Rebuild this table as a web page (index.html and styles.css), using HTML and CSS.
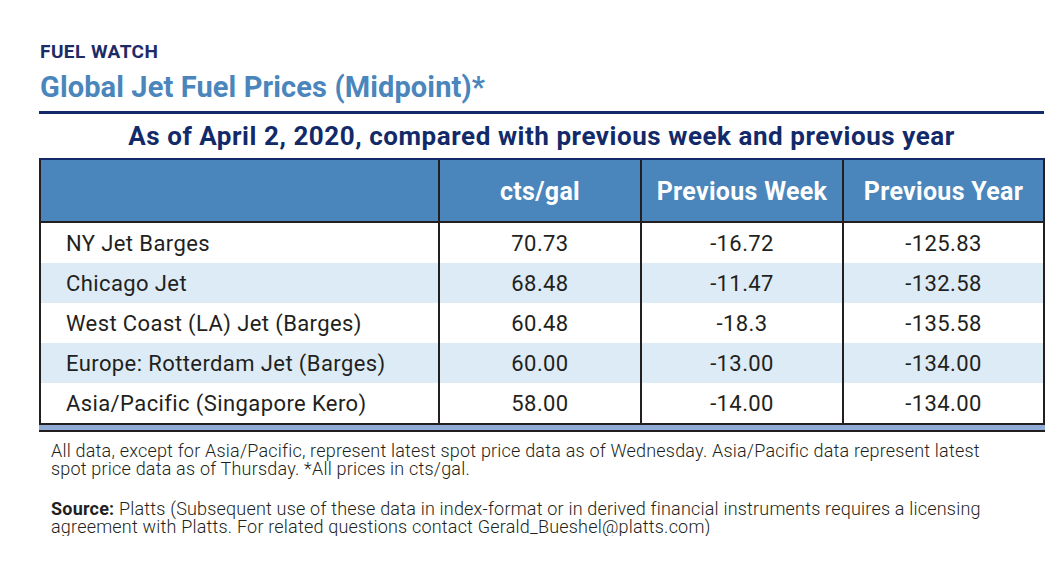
FILE: index.html
```html
<!DOCTYPE html>
<html>
<head>
<meta charset="utf-8">
<link rel="stylesheet" href="styles.css">
</head>
<body>
<div class="page">
  <div class="kicker">FUEL WATCH</div>
  <h1 class="title">Global Jet Fuel Prices (Midpoint)*</h1>
  <div class="rule"></div>
  <h2 class="subtitle">As of April 2, 2020, compared with previous week and previous year</h2>
  <div class="prices">
    <div class="row head">
      <div class="cell name"></div>
      <div class="cell">cts/gal</div>
      <div class="cell">Previous Week</div>
      <div class="cell">Previous Year</div>
    </div>
    <div class="row">
      <div class="cell name">NY Jet Barges</div><div class="cell">70.73</div><div class="cell">-16.72</div><div class="cell">-125.83</div>
    </div>
    <div class="row alt">
      <div class="cell name">Chicago Jet</div><div class="cell">68.48</div><div class="cell">-11.47</div><div class="cell">-132.58</div>
    </div>
    <div class="row">
      <div class="cell name">West Coast (LA) Jet (Barges)</div><div class="cell">60.48</div><div class="cell">-18.3</div><div class="cell">-135.58</div>
    </div>
    <div class="row alt">
      <div class="cell name">Europe: Rotterdam Jet (Barges)</div><div class="cell">60.00</div><div class="cell">-13.00</div><div class="cell">-134.00</div>
    </div>
    <div class="row">
      <div class="cell name">Asia/Pacific (Singapore Kero)</div><div class="cell">58.00</div><div class="cell">-14.00</div><div class="cell">-134.00</div>
    </div>
  </div>
  <div class="band"></div>
  <p class="note">All data, except for Asia/Pacific, represent latest spot price data as of Wednesday. Asia/Pacific data represent latest spot price data as of Thursday. *All prices in cts/gal.</p>
  <p class="note source"><b class="label">Source:</b> Platts (Subsequent use of these data in index-format or in derived financial instruments requires a licensing agreement with Platts. For related questions contact Gerald_Bueshel@platts.com)</p>
</div>
</body>
</html>
```
FILE: styles.css
```css
html, body {
  margin: 0;
  padding: 0;
  background: #ffffff;
}
body {
  font-family: Roboto, "Liberation Sans", sans-serif;
  color: #222222;
}
.page {
  width: 1006px;
  padding: 41px 0 0 39px;
}
.kicker {
  font-size: 19px;
  font-weight: 700;
  color: #1d2b66;
  line-height: 22px;
  padding-left: 1px;
  letter-spacing: 0.45px;
}
.title {
  margin: 0;
  font-size: 29px;
  font-weight: 700;
  color: #4a86bb;
  line-height: 32px;
  padding: 8px 0 0 1px;
  letter-spacing: 0.12px;
}
.rule {
  height: 3px;
  background: #132a6a;
  margin-top: 8px;
  width: 1005px;
}
.subtitle {
  margin: 0;
  text-align: center;
  font-size: 26px;
  font-weight: 700;
  color: #132a6a;
  line-height: 44px;
  letter-spacing: 0.55px;
  width: 1005px;
}
.prices {
  box-sizing: border-box;
  width: 1006px;
  border-top: 2px solid #132a6a;
  border-left: 2px solid #231f20;
  border-right: 2px solid #231f20;
  border-bottom: 2px solid #231f20;
}
.row {
  display: grid;
  grid-template-columns: 399px 202px 202px 199px;
  height: 40px;
}
.row.alt {
  background: #ddebf6;
}
.row.head {
  height: 63px;
  background: #4a86bb;
  border-bottom: 2px solid #231f20;
  box-sizing: border-box;
}
.cell {
  display: flex;
  align-items: center;
  justify-content: center;
  border-right: 2px solid #231f20;
  font-size: 22px;
  letter-spacing: 0.4px;
  color: #231f20;
}
.cell:last-child {
  border-right: none;
}
.cell.name {
  justify-content: flex-start;
  padding-left: 25px;
}
.head .cell {
  color: #ffffff;
  font-size: 25px;
  font-weight: 700;
  letter-spacing: 0.3px;
  padding-top: 2px;
}
.band {
  width: 1006px;
  height: 5px;
  background: #8facd6;
  border-bottom: 2px solid #231f20;
}
.note {
  margin: 10px 0 0 12px;
  font-size: 18px;
  font-weight: 300;
  line-height: 17.5px;
  letter-spacing: 0.2px;
  color: #231f20;
  width: 940px;
}
.source {
  margin-top: 23px;
  line-height: 18px;
}
.source .label {
  display: inline-block;
  font-weight: 700;
  line-height: 17px;
}
```
